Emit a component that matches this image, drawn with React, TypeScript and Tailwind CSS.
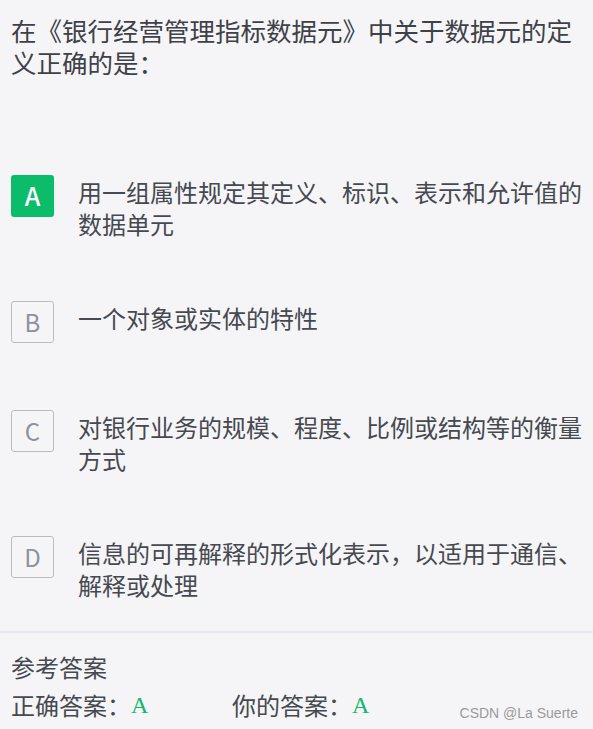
import React from 'react';

const options = [
  { key: 'A', text: '用一组属性规定其定义、标识、表示和允许值的数据单元', selected: true },
  { key: 'B', text: '一个对象或实体的特性', selected: false },
  { key: 'C', text: '对银行业务的规模、程度、比例或结构等的衡量方式', selected: false },
  { key: 'D', text: '信息的可再解释的形式化表示，以适用于通信、解释或处理', selected: false },
];

const font = { fontFamily: '"Noto Sans CJK SC", "Noto Sans", sans-serif' };

export default function App() {
  return (
    <div className="relative h-[729px] w-full overflow-hidden bg-[#f5f5f8] text-[#46494f]" style={font}>
      <div className="px-[11px] pt-[14px] text-[25.5px] leading-[32px] text-[#3e4147]">
        在《银行经营管理指标数据元》中关于数据元的定义正确的是：
      </div>

      <div className="mt-[97px] flex flex-col gap-[62px] pl-[11px] pr-[8px]">
        {options.map((o) => (
          <div key={o.key} className="flex min-h-[47px] items-start">
            <div
              className={
                o.selected
                  ? 'flex h-[42px] w-[43px] shrink-0 items-center justify-center rounded-[3px] bg-[#0bbc6b] text-[25px] font-medium text-white'
                  : 'flex h-[42px] w-[43px] shrink-0 items-center justify-center rounded-[3px] border border-[#b9bcc3] text-[24px] text-[#8d929b]'
              }
            >
              {o.key}
            </div>
            <div className="ml-[24px] mt-[1px] text-[24px] leading-[31.5px]">{o.text}</div>
          </div>
        ))}
      </div>

      <div className="absolute left-0 right-0 top-[631px] h-[2px] bg-[#e6e6f1]" />

      <div className="absolute left-[11px] top-[648px] text-[24px] leading-[38px]">
        <div>参考答案</div>
        <div className="flex">
          <div className="flex w-[221px]">
            <span>正确答案：</span>
            <span className="text-[#12b76a]" style={{ fontFamily: '"Liberation Serif", serif' }}>A</span>
          </div>
          <div className="flex">
            <span>你的答案：</span>
            <span className="text-[#12b76a]" style={{ fontFamily: '"Liberation Serif", serif' }}>A</span>
          </div>
        </div>
      </div>

      <div
        className="absolute bottom-[5px] right-[15px] text-[14px] text-[#9a9a9a]"
        style={{ fontFamily: '"Liberation Sans", Arial, sans-serif' }}
      >
        CSDN @La Suerte
      </div>
    </div>
  );
}
